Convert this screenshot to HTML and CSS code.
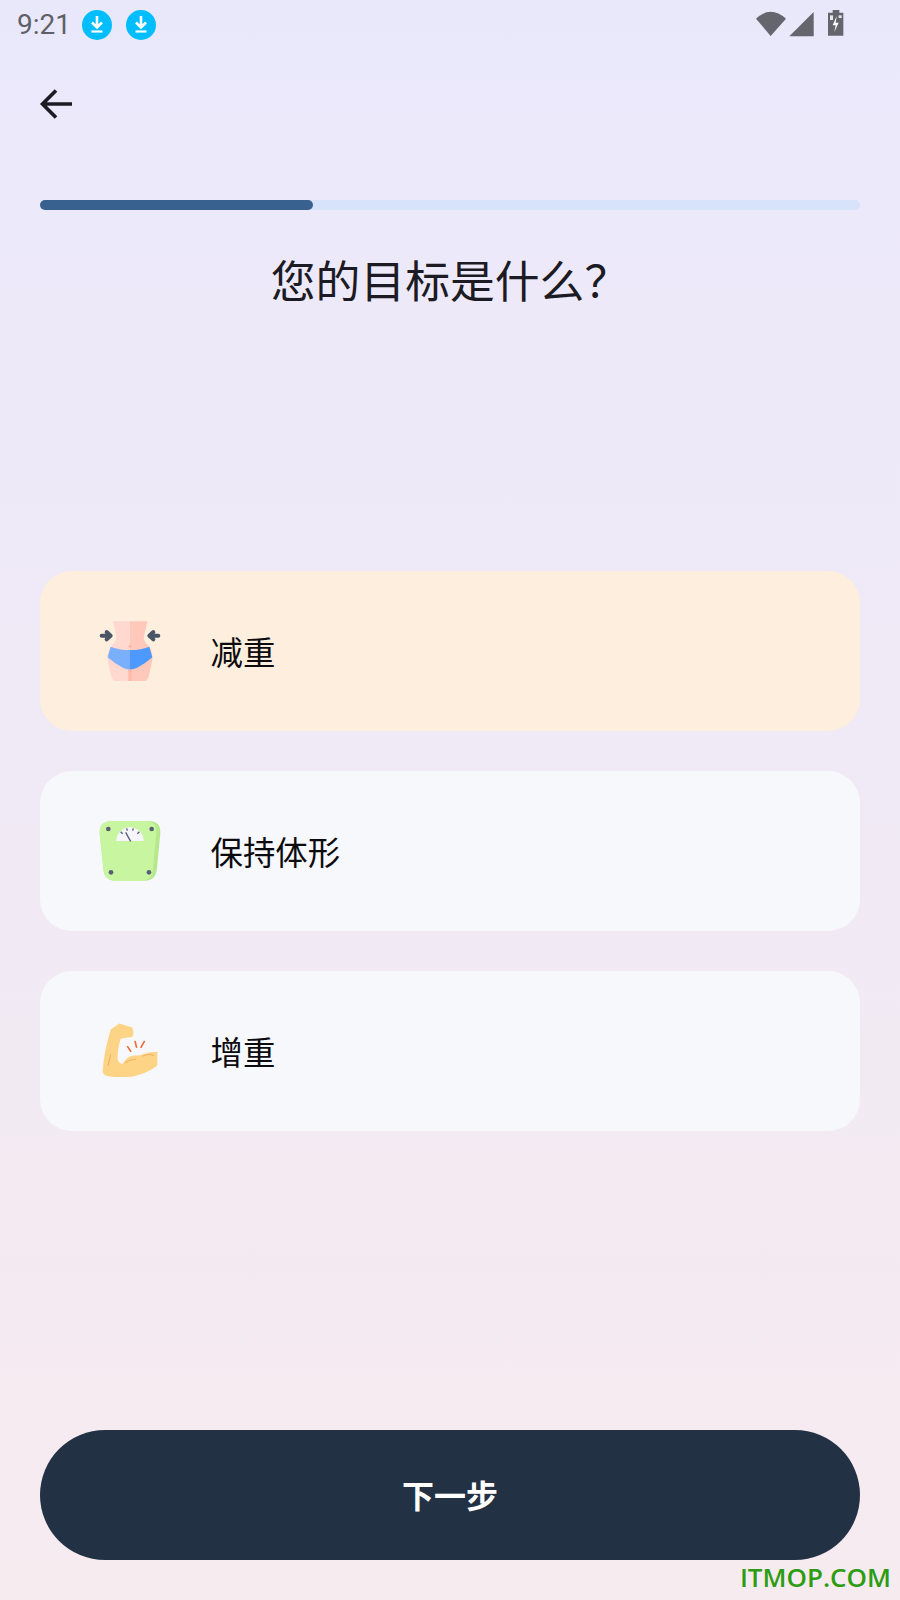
FILE: index.html
```html
<!DOCTYPE html>
<html lang="zh-CN">
<head>
<meta charset="utf-8">
<title>您的目标是什么&#xFF1F;</title>
<link rel="stylesheet" href="styles.css">
</head>
<body>
<main class="page">
  <div class="status">
    <span class="time">9:21</span>
    <svg class="dl" viewBox="0 0 30 30"><circle cx="15" cy="15" r="15" fill="#00bdfd"/><path d="M15 6v11M10 12.5l5 5 5-5" fill="none" stroke="#fff" stroke-width="2.6"/><path d="M9.5 21.5h11" stroke="#fff" stroke-width="2.2"/></svg>
    <svg class="dl dl-second" viewBox="0 0 30 30"><circle cx="15" cy="15" r="15" fill="#00bdfd"/><path d="M15 6v11M10 12.5l5 5 5-5" fill="none" stroke="#fff" stroke-width="2.6"/><path d="M9.5 21.5h11" stroke="#fff" stroke-width="2.2"/></svg>
    <svg class="sys" viewBox="0 0 510 180">
      <path d="M78 56Q122 14 168 56L122 108Z" fill="#65656d"/>
      <path d="M178 109L251 36V109Z" fill="#65656d"/>
      <path d="M308 30h20v8h12v69h-46V38h14Z" fill="#65656d"/>
      <path d="M320 48l-12 28h9l-4 20 13-28h-9l3-20Z" fill="#fff"/>
      <path d="M300 46h9v14h-9Z" fill="#fff" opacity=".85"/>
      <path d="M326 46h9v8h-9Z" fill="#fff" opacity=".85"/>
    </svg>
  </div>
  <div class="nav">
    <svg class="back" viewBox="0 0 34 34"><path d="M33 17H4M17 3.500L3.500 17 17 30.500" fill="none" stroke="#1c1b24" stroke-width="3.600"/></svg>
  </div>
  <div class="track"><div class="fill"></div></div>
  <h1 class="title">您的目标是什么&#xFF1F;</h1>
  <div class="options">
    <div class="option option-active">
      <svg class="pic" viewBox="0 0 300 300">
        <path d="M100 64H150V243H104Q98 240 94 230Q88 205 83 180Q81 150 97 135Q112 122 108 105Q102 85 100 64Z" fill="#ffd8d0"/>
        <path d="M150 64H202Q198 85 192 105Q188 122 203 135Q219 150 217 180Q212 205 206 230Q202 240 196 243H150Z" fill="#ffc8bb"/>
        <rect x="145" y="205" width="10" height="38" fill="#ffb9a9"/>
        <circle cx="150" cy="139" r="4" fill="#ffb09d"/>
        <path d="M92 140Q125 152 150 150V208Q142 209 130 204Q105 192 83 172Z" fill="#79affd"/>
        <path d="M208 140Q175 152 150 150V208Q158 209 170 204Q195 192 217 172Z" fill="#4d99fd"/>
        <path d="M65 107H88M80 96L92 107 80 118" fill="none" stroke="#4b5566" stroke-width="12" stroke-linecap="round" stroke-linejoin="round"/>
        <path d="M235 107H212M220 96L208 107 220 118" fill="none" stroke="#4b5566" stroke-width="12" stroke-linecap="round" stroke-linejoin="round"/>
      </svg>
      <span class="label">减重</span>
    </div>
    <div class="option">
      <svg class="pic" viewBox="0 0 300 300">
        <path d="M100 63H205Q243 63 241 100L231 205Q228 242 195 242H105Q72 242 70 205L59 100Q57 63 100 63Z" fill="#b5e98c"/>
        <path d="M100 63H195Q232 63 229 100L219 205Q216 242 185 242H105Q72 242 70 205L59 100Q57 63 100 63Z" fill="#c8f5a0"/>
        <path d="M109 123A41 41 0 0 1 191 123Z" fill="#f5f5fb"/>
        <path d="M122 95l6 6M140 85l2 7M160 85l-2 7M178 95l-6 6" stroke="#5a5d75" stroke-width="4"/>
        <path d="M137 97l15 27" stroke="#5a5d75" stroke-width="4"/>
        <circle cx="85" cy="87" r="7" fill="#5a5d75"/><circle cx="215" cy="87" r="7" fill="#5a5d75"/>
        <circle cx="93" cy="217" r="7" fill="#5a5d75"/><circle cx="207" cy="217" r="7" fill="#5a5d75"/>
      </svg>
      <span class="label">保持体形</span>
    </div>
    <div class="option">
      <svg class="pic" viewBox="0 -13.500 300 300">
        <path d="M92 75L118 57L157 69Q163 85 158 97L122 103Q112 135 113 165Q118 178 128 178Q138 160 152 155Q165 152 180 152Q205 142 232 142V183Q205 205 160 216Q120 220 85 215Q68 212 68 200Q70 150 92 75Z" fill="#fdd385"/>
        <path d="M92 150Q87 170 84 185M136 175Q150 164 168 165M188 155Q203 146 222 153" fill="none" stroke="#eeb566" stroke-width="3.500"/>
        <path d="M142 125l11 17M165 109l5 21M194 109l-12 21" stroke="#ef6a3c" stroke-width="5"/>
      </svg>
      <span class="label">增重</span>
    </div>
  </div>
  <button class="next" type="button">下一步</button>
  <span class="mark">ITMOP.COM</span>
</main>
</body>
</html>
```
FILE: styles.css
```css
* { box-sizing: border-box; }
html, body { margin: 0; padding: 0; }
.page {
  position: relative;
  width: 900px;
  height: 1600px;
  overflow: hidden;
  display: flex;
  flex-direction: column;
  padding: 0 40px;
  background: linear-gradient(180deg, #e9e8fb 0%, #ece9fa 12%, #f6ebef 100%);
  font-family: "Noto Sans CJK SC", "Noto Sans", sans-serif;
}
.status {
  height: 50px;
  margin: 0 -40px;
  padding-left: 17px;
  display: flex;
  align-items: center;
  color: #5f6066;
}
.time { font: 400 28px/1 Roboto, sans-serif; width: 65px; flex: none; }
.dl { width: 30px; height: 30px; }
.dl-second { margin-left: 14px; }
.sys { width: 170px; height: 60px; margin-left: auto; margin-top: 10px; }
.nav { height: 100px; padding-top: 37px; display: flex; align-items: flex-start; }
.back { width: 34px; height: 34px; margin-left: -1px; }
.track { height: 10px; margin-top: 50px; border-radius: 5px; background: #d6e3fb; }
.fill { width: 273px; height: 10px; border-radius: 5px; background: #38618f; }
.title {
  margin: 37px 0 1px;
  font-weight: 400;
  font-size: 44.8px;
  line-height: 64px;
  text-align: center;
  color: #1c1b24;
}
.options { margin-top: 259px; display: flex; flex-direction: column; gap: 40px; }
.option {
  height: 160px;
  padding: 0 0 2px 40px;
  display: flex;
  align-items: center;
  gap: 30.5px;
  border-radius: 32px;
  background: #f7f8fc;
}
.option-active { background: #feeedd; }
.pic { width: 100px; height: 100px; flex: none; }
.label { font-size: 32.4px; color: #0c0c10; }
.next {
  margin-top: auto;
  margin-bottom: 40px;
  height: 130px;
  padding: 0 0 2px;
  border: 0;
  border-radius: 65px;
  background: #233145;
  color: #fff;
  font: 700 32px "Noto Sans CJK SC", sans-serif;
}
.mark {
  position: absolute;
  right: 9px;
  bottom: 7px;
  font: 600 26px/1.2 "Open Sans", sans-serif;
  color: #2c9c12;
}
```
